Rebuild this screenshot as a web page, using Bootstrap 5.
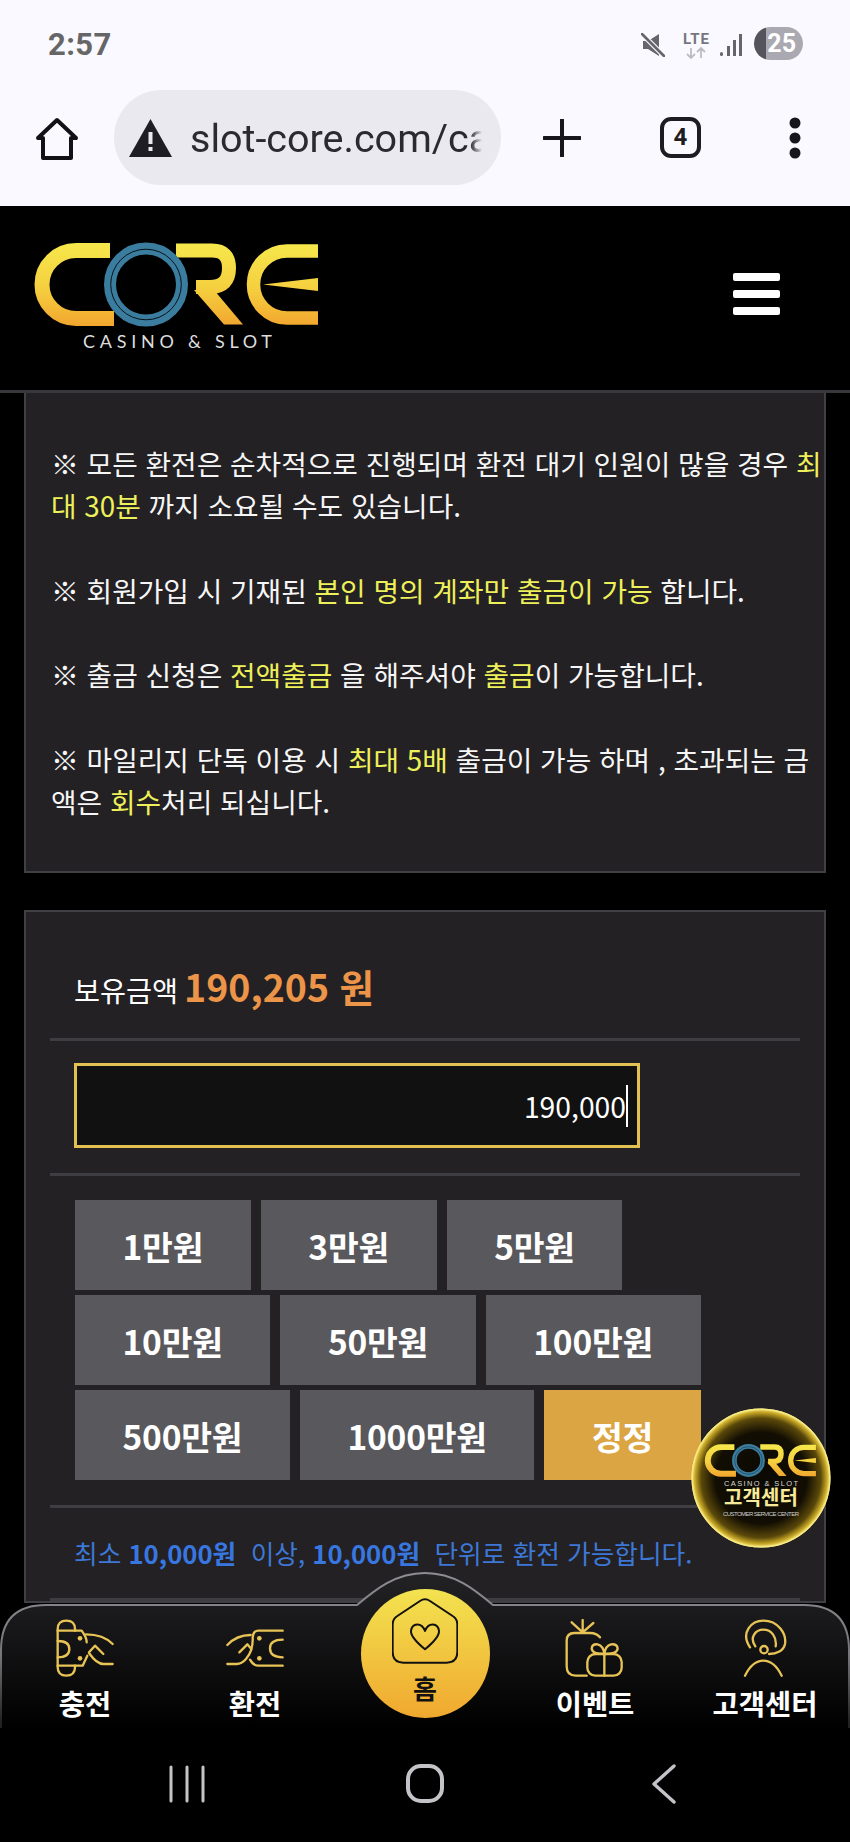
<!DOCTYPE html>
<html lang="ko">
<head>
<meta charset="utf-8">
<title>CORE</title>
<link rel="stylesheet" href="https://cdn.jsdelivr.net/npm/bootstrap@5.3.0/dist/css/bootstrap.min.css">
<style>
html,body{height:100%;margin:0;background:#000;overflow:hidden}
body{font-family:"Noto Sans CJK KR","Liberation Sans",sans-serif;color:#fff}
.phone{width:850px;height:1842px;position:relative;overflow:hidden}
.chrome-top{height:206px;background:#f9f9ff;flex:none}
.status-row{height:78px;padding:33px 48px 0 48px}
.clock{font:700 31px/1 Roboto,"Liberation Sans",sans-serif;color:#666;letter-spacing:.4px;margin-top:-4px}
.mute-ic{margin-right:5px}
.lte-ic{margin-left:12px}
.sig-ic{margin-left:9px}
.batt{width:49px;height:33px;border-radius:17px;background:linear-gradient(90deg,#55545c 0 25%,#aaa8b0 25%);color:#fff;font:700 25px/33px Roboto,"Liberation Sans",sans-serif;text-align:right;padding-right:7px;margin-top:-6px;margin-left:11px;margin-right:-1px}
.tool-row{height:122px;padding-top:12px;padding-left:35px}
.home-ic{margin-top:27px;flex:none}
.url-pill{width:387px;height:95px;border-radius:48px;background:#e9e9ef;margin-left:35px;margin-right:42px;padding-left:15px;gap:18px;overflow:hidden;flex:none}
.url-text{font:400 39.5px/1 Roboto,"Liberation Sans",sans-serif;color:#2a2a30;white-space:nowrap;width:292px;overflow:hidden;padding-top:3px;-webkit-mask-image:linear-gradient(90deg,#000 96%,transparent);mask-image:linear-gradient(90deg,#000 96%,transparent)}
.plus-ic{margin-top:29px;flex:none}
.tab-count{width:41px;height:41px;border:4px solid #1c1c22;border-radius:11px;font:700 24px/33px Roboto,"Liberation Sans",sans-serif;color:#1c1c22;text-align:center;margin:27px 87px 0 79px;flex:none}
.dots-ic{margin-top:26px;flex:none}
.site-head{height:187px;background:#000;border-bottom:3px solid #38383c;padding-left:20px;padding-bottom:4px;flex:none}
.burger{width:47px;margin-left:auto;margin-right:70px;margin-top:-4px;gap:9px}
.burger i{display:block;height:8px;border-radius:2px;background:#fff}
.scroll-area{flex:1 1 auto;overflow:hidden;padding:0 24px;min-height:0}
.dark-panel{background:#232124;border:2px solid #403f44}
.notice{border-top:0;padding:49px 2px 49px 25px;font-size:27.8px;line-height:42.25px;margin-bottom:37px;color:#f6f6f6}
.hl{color:#eef05a}
.sect{margin:0 24px;border-bottom:3px solid #3e3d42;padding:0 24px}
.sect-bal{height:129px;padding-top:44px;font-size:28.3px;line-height:60px}
.bal{font-size:37.5px;font-weight:700;color:#ec9448;margin-left:-2px}
.sect-input{height:135px;padding-top:22px}
.amount-box{width:566px;height:85px;background:#111;border:3px solid #e3c052;color:#fff;font-size:28.3px;padding:0 9px 0 0}
.caret-bar{display:inline-block;width:2px;height:42px;background:#fff}
.sect-btns{padding:24px 0 24px 25px;height:332px;gap:5px 10px;align-content:flex-start}
.amt-btn{background:#59585c;color:#fff;height:90px;padding:0 47.5px;border:0;border-radius:0;font-size:33.5px;font-weight:700;line-height:1;letter-spacing:-.2px}
.amt-btn.fix{background:#dca544;color:#fff}
.sect-note{height:93px;color:#3d78d6;font-size:25.7px;white-space:pre}
.sect-note b{font-weight:700;color:#3877e0}
.fab{position:absolute;left:691px;top:1408px;width:140px;height:140px;z-index:6}
.bottom-nav{position:absolute;left:0;top:1572px;width:850px;height:156px;z-index:5}
.nav-bg{position:absolute;left:0;top:0}
.nav-cells{position:relative;height:156px}
.nav-cell{width:170px;padding-top:47px;color:#fff;font-weight:700;font-size:28.5px;line-height:1;text-decoration:none;gap:12px}
.nav-cell svg{display:block}
.home-cell{padding-top:17px}
.home-disc{width:129px;height:129px;border-radius:50%;background:linear-gradient(180deg,#f3e350,#f0a82f);color:#111;font-size:26px;font-weight:700;padding-top:9px;gap:11px;text-decoration:none}
.os-nav{height:114px;background:#000;flex:none}
.ink{fill:none;stroke:#e8c355;stroke-width:7;stroke-linecap:round;stroke-linejoin:round}
.ink-dot{fill:#e8c355}
</style>
</head>
<body>
<svg width="0" height="0" class="d-block position-absolute">
  <defs>
    <linearGradient id="lg" gradientUnits="userSpaceOnUse" x1="0" y1="17" x2="0" y2="100">
      <stop offset="0" stop-color="#f6e84c"/><stop offset=".55" stop-color="#f5cf3f"/><stop offset="1" stop-color="#f2a62f"/>
    </linearGradient>
    <g id="coremark">
      <path d="M90 24.5H56A34 34 0 0 0 56 92.5H94" fill="none" stroke="url(#lg)" stroke-width="15"/>
      <path d="M156 24.5H192Q209 24.5 209 42Q209 61 190 61H176" fill="none" stroke="url(#lg)" stroke-width="14"/>
      <polygon points="174,64 194,64 223,98.5 204,98.5" fill="url(#lg)"/>
      <path d="M298 25H267A33.5 33.5 0 0 0 267 92H298" fill="none" stroke="url(#lg)" stroke-width="13.5"/>
      <polygon points="243,58.5 298,52 298,65" fill="url(#lg)"/>
      <circle cx="126" cy="58.5" r="36" fill="none" stroke="#3b7d9f" stroke-width="12"/>
      <circle cx="126" cy="58.5" r="35.3" fill="none" stroke="#07121a" stroke-width="1"/>
    </g>
  </defs>
</svg>

<div class="phone d-flex flex-column">
  <div class="chrome-top">
    <div class="status-row d-flex justify-content-between align-items-start">
      <span class="clock">2:57</span>
      <div class="d-flex align-items-start">
        <svg class="mute-ic" width="24" height="24" viewBox="0 0 24 24"><path d="M2 8h5l11-7v22L7 16H2z" fill="#66656c"/><path d="M0 0 22 22" stroke="#f9f9ff" stroke-width="5"/><path d="M1 1 23 23" stroke="#66656c" stroke-width="2.6" stroke-linecap="round"/></svg>
        <svg class="lte-ic" width="28" height="26" viewBox="0 0 28 26"><text x="14" y="11" text-anchor="middle" font-family="Roboto,Liberation Sans,sans-serif" font-weight="700" font-size="15" fill="#77767c" textLength="26">LTE</text><path d="M9 25V15M5 21l4 4 4-4M19 25V15M15 19l4-4 4 4" fill="none" stroke="#bdbcc2" stroke-width="1.8"/></svg>
        <svg class="sig-ic" width="24" height="24" viewBox="0 0 24 24"><g fill="#66656c"><rect x="1" y="19" width="3" height="4" rx="1.5"/><rect x="8" y="13" width="3" height="10"/><rect x="14" y="7" width="3" height="16"/><rect x="20" y="1" width="3" height="22"/></g></svg>
        <div class="batt">25</div>
      </div>
    </div>
    <div class="tool-row d-flex align-items-start">
      <svg class="home-ic" width="44" height="44" viewBox="0 0 44 44"><path d="M22 3 41 21H36V41H8V21H3Z" fill="none" stroke="#111116" stroke-width="4" stroke-linejoin="round"/></svg>
      <div class="url-pill d-flex align-items-center">
        <svg width="43" height="38" viewBox="0 0 43 38"><path d="M21.5 0 43 38H0Z" fill="#1e1e24"/><rect x="19.5" y="13" width="4" height="12" fill="#e9e9ef"/><rect x="19.5" y="28" width="4" height="4" fill="#e9e9ef"/></svg>
        <div class="url-text">slot-core.com/cas</div>
      </div>
      <svg class="plus-ic" width="38" height="38" viewBox="0 0 38 38"><path d="M19 1V37M1 19H37" stroke="#16161c" stroke-width="4" stroke-linecap="round"/></svg>
      <div class="tab-count">4</div>
      <svg class="dots-ic" width="14" height="44" viewBox="0 0 14 44"><g fill="#16161c"><circle cx="7" cy="7" r="5.5"/><circle cx="7" cy="22" r="5.5"/><circle cx="7" cy="37" r="5.5"/></g></svg>
    </div>
  </div>

  <header class="site-head d-flex align-items-center">
    <svg width="310" height="140" viewBox="0 0 310 140" class="flex-shrink-0">
      <use href="#coremark"/>
      <text x="63" y="122" font-family="Lato,Liberation Sans,sans-serif" font-size="18" font-weight="400" fill="#ddd" textLength="189">CASINO &amp; SLOT</text>
    </svg>
    <div class="burger d-flex flex-column"><i></i><i></i><i></i></div>
  </header>

  <main class="scroll-area">
    <section class="dark-panel notice">
      ※ 모든 환전은 순차적으로 진행되며 환전 대기 인원이 많을 경우 <span class="hl">최대 30분</span> 까지 소요될 수도 있습니다.<br><br>
      ※ 회원가입 시 기재된 <span class="hl">본인 명의 계좌만 출금이 가능</span> 합니다.<br><br>
      ※ 출금 신청은 <span class="hl">전액출금</span> 을 해주셔야 <span class="hl">출금</span>이 가능합니다.<br><br>
      ※ 마일리지 단독 이용 시 <span class="hl">최대 5배</span> 출금이 가능 하며 , 초과되는 금액은 <span class="hl">회수</span>처리 되십니다.
    </section>

    <section class="dark-panel">
      <div class="sect sect-bal">보유금액 <span class="bal">190,205 원</span></div>
      <div class="sect sect-input">
        <div class="amount-box d-flex align-items-center justify-content-end">190,000<span class="caret-bar"></span></div>
      </div>
      <div class="sect sect-btns d-flex flex-wrap">
        <button class="btn amt-btn" type="button">1만원</button>
        <button class="btn amt-btn" type="button">3만원</button>
        <button class="btn amt-btn" type="button">5만원</button>
        <button class="btn amt-btn" type="button">10만원</button>
        <button class="btn amt-btn" type="button">50만원</button>
        <button class="btn amt-btn" type="button">100만원</button>
        <button class="btn amt-btn" type="button">500만원</button>
        <button class="btn amt-btn" type="button">1000만원</button>
        <button class="btn amt-btn fix" type="button">정정</button>
      </div>
      <div class="sect sect-note d-flex align-items-center">최소 <b>10,000원</b>  이상, <b>10,000원</b>  단위로 환전 가능합니다.</div>
    </section>
  </main>

  <div class="os-nav d-flex">
    <svg width="850" height="114" viewBox="0 0 850 114">
      <g stroke="#c4c4c8" stroke-width="3" stroke-linecap="round"><path d="M171 39V73M187 39V73M203 39V73"/></g>
      <rect x="408" y="38" width="34" height="35" rx="13" fill="none" stroke="#c4c4c8" stroke-width="4"/>
      <path d="M674 38 654 56 674 74" fill="none" stroke="#c4c4c8" stroke-width="3.4" stroke-linecap="round" stroke-linejoin="round"/>
    </svg>
  </div>

  <a class="fab d-block" href="#" aria-label="고객센터">
    <svg width="140" height="140" viewBox="0 0 140 140">
      <defs>
        <radialGradient id="fg" cx=".5" cy=".5" r=".5">
          <stop offset="0" stop-color="#0b0903"/><stop offset=".66" stop-color="#120e03"/><stop offset=".86" stop-color="#5a480a"/><stop offset=".95" stop-color="#c9a926"/><stop offset="1" stop-color="#fdf39a"/>
        </radialGradient>
      </defs>
      <circle cx="70" cy="70" r="69.5" fill="url(#fg)"/>
      <circle cx="70" cy="70" r="68.8" fill="none" stroke="#f7e97c" stroke-width="1.4"/>
      <use href="#coremark" transform="translate(8.1 29.5) scale(.392)"/>
      <text x="70" y="78" text-anchor="middle" font-family="Liberation Sans,sans-serif" font-size="7.5" fill="#d8d8d8" textLength="74">CASINO &amp; SLOT</text>
      <text x="70" y="97" text-anchor="middle" font-family="Noto Sans CJK KR,sans-serif" font-weight="700" font-size="20" fill="#f6ea9a" textLength="74">고객센터</text>
      <text x="70" y="108" text-anchor="middle" font-family="Liberation Sans,sans-serif" font-size="6" fill="#cfcfcf" textLength="76">CUSTOMER SERVICE CENTER</text>
    </svg>
  </a>

  <nav class="bottom-nav">
    <svg class="nav-bg" width="850" height="156" viewBox="0 0 850 156">
      <defs>
        <linearGradient id="nf" x1="0" y1="0" x2="0" y2="1"><stop offset="0" stop-color="#232326"/><stop offset=".3" stop-color="#19191b"/><stop offset="1" stop-color="#000"/></linearGradient>
        <linearGradient id="ns" gradientUnits="userSpaceOnUse" x1="0" y1="0" x2="0" y2="150"><stop offset="0" stop-color="#8e8e92"/><stop offset=".55" stop-color="#77777b"/><stop offset="1" stop-color="#222"/></linearGradient>
      </defs>
      <path d="M1 156V78Q1 33 46 33H357C375 18 395 1 425 1C455 1 475 18 493 33H804Q849 33 849 78V156" fill="url(#nf)" stroke="url(#ns)" stroke-width="2"/>
    </svg>
    <div class="nav-cells d-flex">
      <a class="nav-cell d-flex flex-column align-items-center" href="#">
        <svg width="60" height="58" viewBox="45 30 180 174">
          <g class="ink">
            <path d="M53 65V60Q53 35 79 35Q105 35 105 60V65M53 170V175Q53 200 79 200Q105 200 105 175V170"/>
            <path d="M53 65V170H128L142 140M53 65H125Q140 85 140 100"/>
            <path d="M53 96Q88 96 88 120Q88 145 53 145"/>
            <path d="M138 76Q190 76 218 105M147 130 165 110 190 135M147 132Q170 165 190 165H218"/>
          </g>
          <circle class="ink-dot" cx="120" cy="88" r="7"/><circle class="ink-dot" cx="120" cy="148" r="7"/>
        </svg>
        충전
      </a>
      <a class="nav-cell d-flex flex-column align-items-center" href="#">
        <svg width="60" height="58" viewBox="555 30 180 174">
          <g class="ink">
            <path d="M728 65H655Q640 65 638 85Q640 125 618 150Q605 165 590 165H562"/>
            <path d="M728 170H655Q640 170 630 152"/>
            <path d="M562 108Q590 78 632 78"/>
            <path d="M598 130 622 106 634 120"/>
            <path d="M728 92Q690 92 690 118Q690 145 728 145"/>
          </g>
          <circle class="ink-dot" cx="658" cy="88" r="7"/><circle class="ink-dot" cx="658" cy="148" r="7"/>
        </svg>
        환전
      </a>
      <div class="nav-cell home-cell d-flex flex-column align-items-center">
        <a class="home-disc d-flex flex-column align-items-center" href="#">
          <svg width="66" height="66" viewBox="126 96 198 198">
            <path d="M210 105Q225 95 240 105L308 150Q322 158 322 176V258Q322 290 290 290H160Q128 290 128 258V176Q128 158 142 150Z" fill="none" stroke="#111" stroke-width="6" stroke-linejoin="round"/>
            <path d="M225 250C195 225 182 208 183 195C186 170 215 168 225 195C235 168 264 170 267 195C268 208 255 225 225 250Z" fill="none" stroke="#111" stroke-width="6" stroke-linejoin="round"/>
          </svg>
          홈
        </a>
      </div>
      <a class="nav-cell d-flex flex-column align-items-center" href="#">
        <svg width="60" height="58" viewBox="80 30 180 174">
          <g class="ink">
            <path d="M185 85Q175 72 155 72H108Q85 72 85 95V172Q85 200 112 200H145"/>
            <path d="M133 70 100 40M133 70V33M133 70 165 42"/>
            <rect x="147" y="135" width="103" height="65" rx="24"/>
            <path d="M198 135V200"/>
            <path d="M198 135Q160 135 160 118Q162 104 178 106Q195 110 198 135Q201 110 218 106Q236 104 238 118Q238 135 198 135"/>
          </g>
        </svg>
        이벤트
      </a>
      <a class="nav-cell d-flex flex-column align-items-center" href="#">
        <svg width="60" height="58" viewBox="590 30 180 174">
          <g class="ink">
            <path d="M635 115C605 70 640 35 675 35C720 35 745 75 740 105C736 125 715 135 692 135"/>
            <path d="M651 112C632 85 652 62 675 62C700 62 716 85 712 112"/>
            <circle cx="677" cy="122" r="11"/>
            <path d="M620 200C635 170 655 155 675 155C695 155 715 170 730 200"/>
          </g>
        </svg>
        고객센터
      </a>
    </div>
  </nav>
</div>
</body>
</html>
